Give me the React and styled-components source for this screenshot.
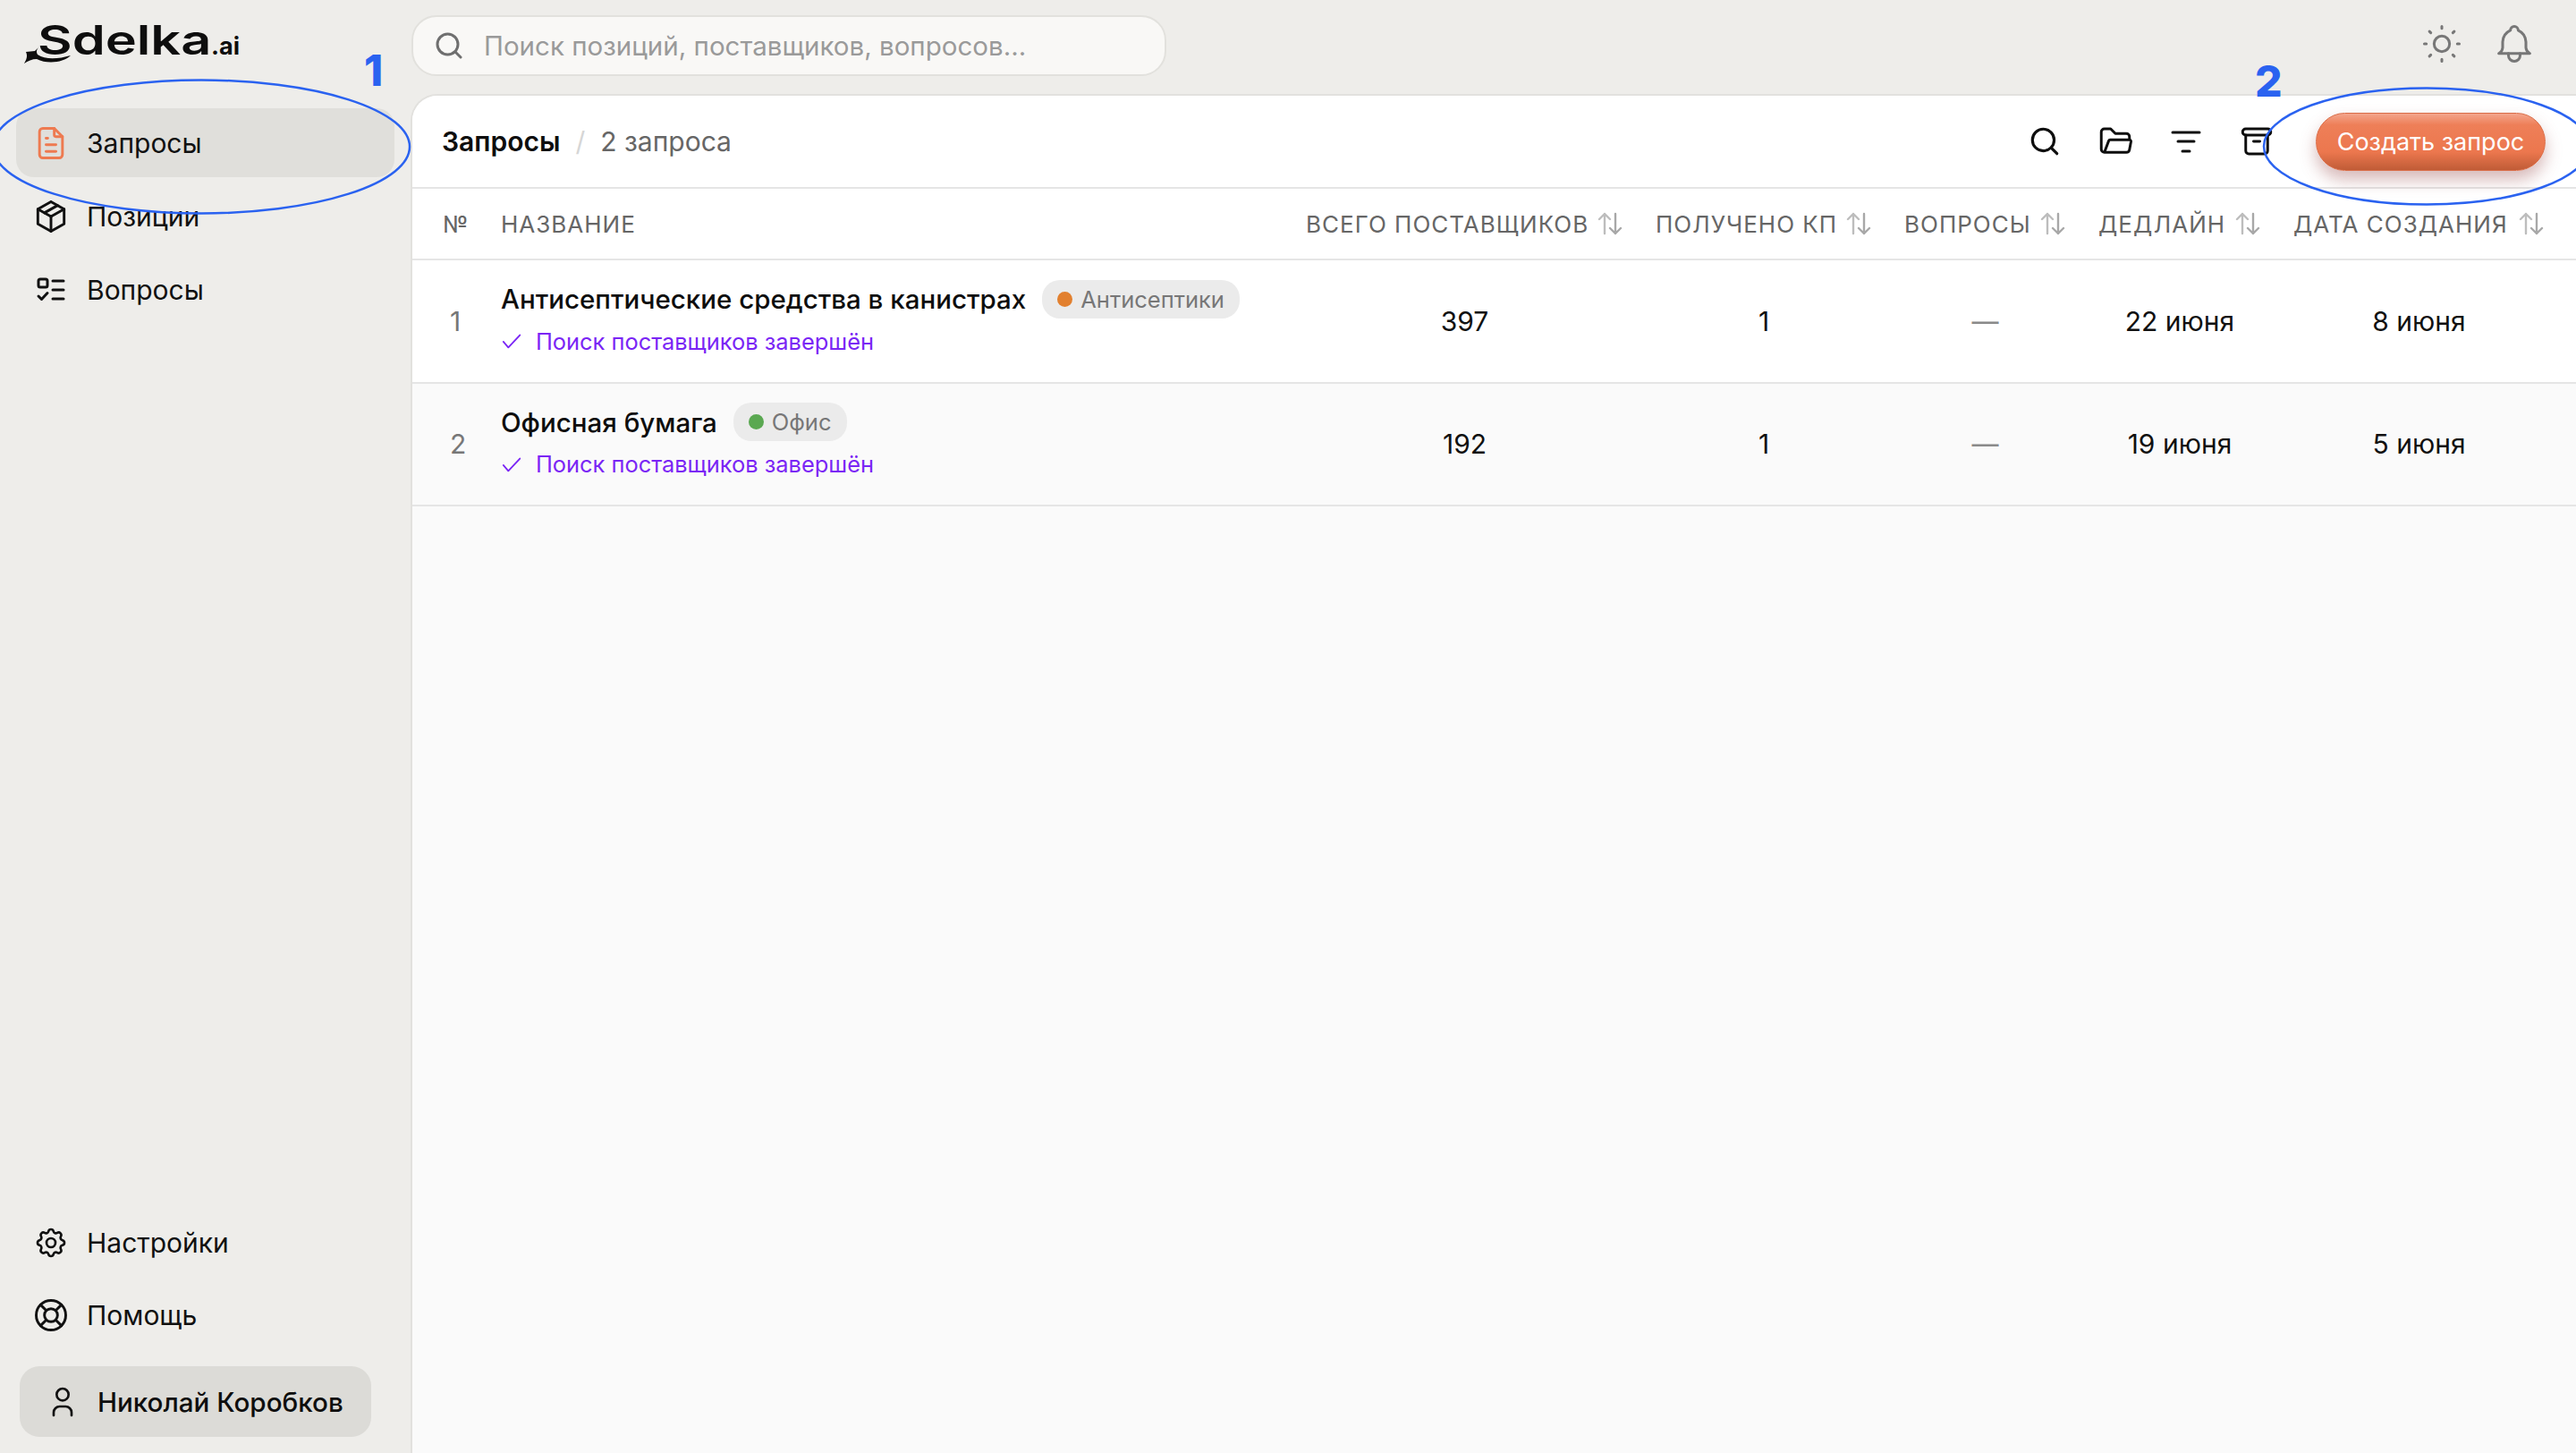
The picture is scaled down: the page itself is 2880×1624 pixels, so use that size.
import styled, { createGlobalStyle } from 'styled-components';
import {
  TbFileText, TbPackage, TbSettings, TbLifebuoy, TbUser, TbFolderOpen,
  TbArchive, TbSun, TbBell,
} from 'react-icons/tb';

const GlobalStyle = createGlobalStyle`
  html, body { margin: 0; padding: 0; background: #eeedea; }
  body { font-family: Inter, "Noto Sans", sans-serif; color: #0e0e0e; }
  * { box-sizing: border-box; }
`;

function SearchIcon({ size = 38 }) {
  return (
    <svg width={size} height={size} viewBox="0 0 36 36" fill="none" stroke="currentColor" strokeWidth="3" strokeLinecap="round">
      <circle cx="16.5" cy="16.5" r="11.5" />
      <path d="M25 25 L31 31" />
    </svg>
  );
}

function FilterIcon() {
  return (
    <svg viewBox="0 0 38 38" fill="none" stroke="currentColor" strokeWidth="3" strokeLinecap="round">
      <path d="M4 9 H34 M10 19 H28 M15 30 H23" />
    </svg>
  );
}

function QuestionsIcon() {
  return (
    <svg viewBox="0 0 36 36" fill="none" stroke="currentColor" strokeWidth="3" strokeLinecap="round" strokeLinejoin="round">
      <rect x="4" y="6" width="10" height="9" rx="2" />
      <path d="M4 25 L7.5 28.5 L14 21.5" />
      <path d="M20 8 H32 M20 18 H32 M20 28 H32" />
    </svg>
  );
}

function CheckIcon() {
  return (
    <svg viewBox="0 0 26 26" fill="none" stroke="currentColor" strokeWidth="2" strokeLinecap="round" strokeLinejoin="round">
      <path d="M3 14 L9 21 L23 6" />
    </svg>
  );
}

function SortIcon() {
  return (
    <SortSvg viewBox="0 0 30 30" fill="none" strokeWidth="2.4" strokeLinecap="round" strokeLinejoin="round">
      <path stroke="#bdbdbd" d="M9 26 V4 M3 10 L9 4 L15 10" />
      <path stroke="#a8a8a8" d="M21 4 V26 M15 20 L21 26 L27 20" />
    </SortSvg>
  );
}

const requests = [
  { id: 1, name: 'Антисептические средства в канистрах', tag: 'Антисептики', dot: '#e2802f', suppliers: 397, offers: 1, deadline: '22 июня', created: '8 июня' },
  { id: 2, name: 'Офисная бумага', tag: 'Офис', dot: '#5aa851', suppliers: 192, offers: 1, deadline: '19 июня', created: '5 июня', muted: true },
];

const columns = ['Всего поставщиков', 'Получено КП', 'Вопросы', 'Дедлайн', 'Дата создания'];

export default function App() {
  return (
    <Page>
      <GlobalStyle />
      <Sidebar>
        <Logo>
          <LogoSwoosh viewBox="0 0 52 20" fill="#0e0e0e">
            <path d="M0 20 C3 15 4 11 2 7 L12 6 C14 4 16 2 17 1 C14 4 13 7 15 10 C24 16 38 15 52 11 C44 19 26 21 14 15 C9 15 4 17 0 20 Z" />
          </LogoSwoosh>
          <LogoWord>Sdelka</LogoWord>
          <LogoSuffix>.ai</LogoSuffix>
        </Logo>
        <Nav>
          <NavItem $active>
            <NavIcon $accent><TbFileText /></NavIcon>
            Запросы
          </NavItem>
          <NavItem>
            <NavIcon><TbPackage /></NavIcon>
            Позиции
          </NavItem>
          <NavItem>
            <NavIcon><QuestionsIcon /></NavIcon>
            Вопросы
          </NavItem>
        </Nav>
        <SidebarBottom>
          <NavItem>
            <NavIcon $size={40}><TbSettings /></NavIcon>
            Настройки
          </NavItem>
          <NavItem>
            <NavIcon><TbLifebuoy /></NavIcon>
            Помощь
          </NavItem>
          <UserChip>
            <NavIcon $size={40}><TbUser /></NavIcon>
            Николай Коробков
          </UserChip>
        </SidebarBottom>
      </Sidebar>

      <Main>
        <TopBar>
          <SearchBox>
            <SearchGlyph><SearchIcon size={36} /></SearchGlyph>
            <SearchPlaceholder>Поиск позиций, поставщиков, вопросов...</SearchPlaceholder>
          </SearchBox>
          <TopActions>
            <TbSun />
            <TbBell />
          </TopActions>
        </TopBar>

        <Panel>
          <PanelHeader>
            <Breadcrumbs>
              <CrumbTitle>Запросы</CrumbTitle>
              <CrumbSlash>/</CrumbSlash>
              <CrumbCount>2 запроса</CrumbCount>
            </Breadcrumbs>
            <HeaderActions>
              <ActionIcons>
                <SearchIcon />
                <TbFolderOpen />
                <FilterIcon />
                <TbArchive />
              </ActionIcons>
              <CreateButton>Создать запрос</CreateButton>
            </HeaderActions>
          </PanelHeader>

          <HeadRow>
            <HeadCell>№</HeadCell>
            <HeadCell>Название</HeadCell>
            {columns.map((title) => (
              <HeadCell key={title}>
                {title}
                <SortIcon />
              </HeadCell>
            ))}
          </HeadRow>

          {requests.map((item) => (
            <Row key={item.id} $muted={item.muted}>
              <RowNumber>{item.id}</RowNumber>
              <NameCell>
                <NameLine>
                  {item.name}
                  <Tag>
                    <TagDot $color={item.dot} />
                    {item.tag}
                  </Tag>
                </NameLine>
                <Status>
                  <CheckIcon />
                  Поиск поставщиков завершён
                </Status>
              </NameCell>
              <ValueCell>{item.suppliers}</ValueCell>
              <ValueCell>{item.offers}</ValueCell>
              <ValueCell $dim>—</ValueCell>
              <ValueCell>{item.deadline}</ValueCell>
              <ValueCell>{item.created}</ValueCell>
            </Row>
          ))}
        </Panel>
      </Main>

      <Ellipse $left={-10} $top={88} $width={470} $height={152} viewBox="0 0 470 152">
        <ellipse cx="235" cy="76" rx="233" ry="74.5" />
      </Ellipse>
      <Ellipse $left={2529} $top={97} $width={368} $height={133} viewBox="0 0 368 133">
        <ellipse cx="184" cy="66.5" rx="182" ry="65" />
      </Ellipse>
      <Mark $left={407} $top={50}>1</Mark>
      <Mark $left={2521} $top={62}>2</Mark>
    </Page>
  );
}

const Page = styled.div`
  position: relative;
  display: flex;
  width: 100%;
  height: 100vh;
  overflow: hidden;
  background: #eeedea;
`;

const Sidebar = styled.aside`
  display: flex;
  flex-direction: column;
  flex: 0 0 459px;
  padding: 0 18px 18px;
`;

const Logo = styled.div`
  position: relative;
  display: flex;
  align-items: baseline;
  height: 121px;
  padding: 17px 0 0 24px;
  color: #0e0e0e;
`;

const LogoSwoosh = styled.svg`
  position: absolute;
  left: 9px;
  top: 51px;
  width: 52px;
  height: 20px;
`;

const LogoWord = styled.span`
  display: inline-block;
  width: 194px;
  font-family: Inter, sans-serif;
  font-size: 45px;
  font-weight: 600;
  line-height: 56px;
  transform: scaleX(1.32);
  transform-origin: left center;
`;

const LogoSuffix = styled.span`
  font-family: Inter, sans-serif;
  font-size: 27px;
  font-weight: 700;
`;

const Nav = styled.nav`
  display: flex;
  flex-direction: column;
  gap: 5px;
`;

const NavItem = styled.div`
  display: flex;
  align-items: center;
  gap: 22px;
  height: 77px;
  padding-left: 21px;
  border-radius: 20px;
  font-size: 30px;
  color: #111;
  background: ${(p) => (p.$active ? '#e0dfdb' : 'transparent')};
`;

const NavIcon = styled.span`
  display: flex;
  align-items: center;
  justify-content: center;
  width: 36px;
  height: 36px;
  color: ${(p) => (p.$accent ? '#ee7a50' : '#111')};

  svg {
    flex: none;
    width: 36px;
    height: 36px;
  }

  svg[viewBox='0 0 24 24'] {
    width: ${(p) => p.$size || 44}px;
    height: ${(p) => p.$size || 44}px;
    stroke-width: 1.6;
  }
`;

const SidebarBottom = styled.div`
  display: flex;
  flex-direction: column;
  gap: 4px;
  margin-top: auto;
`;

const UserChip = styled.div`
  display: flex;
  align-items: center;
  gap: 21px;
  width: 393px;
  height: 79px;
  margin: 15px 0 0 4px;
  padding-left: 30px;
  border-radius: 22px;
  background: #dcdbd7;
  font-size: 29.6px;
  font-weight: 500;
`;

const Main = styled.main`
  display: flex;
  flex-direction: column;
  flex: 1;
  min-width: 0;
`;

const TopBar = styled.header`
  display: flex;
  align-items: flex-start;
  justify-content: space-between;
  height: 105px;
  padding: 17px 43px 0 1px;
`;

const SearchBox = styled.div`
  display: flex;
  align-items: center;
  gap: 21px;
  width: 844px;
  height: 68px;
  padding-left: 22px;
  border: 2px solid #e2e1dd;
  border-radius: 28px;
  background: #f9f8f6;
`;

const SearchGlyph = styled.span`
  display: flex;
  color: #6f6f6f;
`;

const SearchPlaceholder = styled.span`
  font-size: 29.5px;
  color: #9a9a9a;
`;

const TopActions = styled.div`
  display: flex;
  gap: 29px;
  padding-top: 6px;
  color: #777;

  svg {
    width: 52px;
    height: 52px;
    stroke-width: 1.4;
  }
`;

const Panel = styled.section`
  flex: 1;
  border-top: 2px solid #e2e1de;
  border-left: 2px solid #e2e1de;
  border-top-left-radius: 30px;
  background: #fafafa;
  overflow: hidden;
`;

const PanelHeader = styled.div`
  display: flex;
  align-items: center;
  justify-content: space-between;
  height: 104px;
  padding: 0 34px 0 33px;
  border-bottom: 2px solid #e5e5e5;
  background: #fff;
`;

const Breadcrumbs = styled.div`
  display: flex;
  align-items: center;
  gap: 17px;
  font-size: 30px;
`;

const CrumbTitle = styled.span`
  font-weight: 600;
`;

const CrumbSlash = styled.span`
  color: #d6d6d6;
`;

const CrumbCount = styled.span`
  color: #666;
`;

const HeaderActions = styled.div`
  display: flex;
  align-items: center;
  gap: 47px;
`;

const ActionIcons = styled.div`
  display: flex;
  align-items: center;
  gap: 41px;
  color: #0e0e0e;

  svg {
    flex: none;
    width: 38px;
    height: 38px;
  }

  svg[viewBox='0 0 24 24'] {
    width: 42px;
    height: 42px;
    margin: 0 -2px;
    stroke-width: 1.7;
  }
`;

const CreateButton = styled.button`
  width: 257px;
  height: 65px;
  padding: 0;
  border: 1px solid #d96d48;
  border-radius: 33px;
  background: linear-gradient(180deg, #f3a58c 0%, #ee7f58 20%, #ec774e 68%, #c05c37 100%);
  box-shadow: 0 10px 18px rgba(150, 70, 70, 0.38);
  font-family: Inter, sans-serif;
  font-size: 27px;
  color: #fff;
`;

const tableGrid = `
  display: grid;
  grid-template-columns: 29px 1fr 355px 242px 181px 182px 281px;
  column-gap: 36px;
  padding: 0 35px 0 34px;
`;

const HeadRow = styled.div`
  ${tableGrid}
  align-items: center;
  height: 80px;
  border-bottom: 2px solid #e5e5e5;
  background: #fff;
`;

const HeadCell = styled.div`
  display: flex;
  align-items: center;
  justify-content: space-between;
  font-size: 26px;
  font-weight: 400;
  letter-spacing: 1px;
  text-transform: uppercase;
  color: #666;
  white-space: nowrap;
`;

const SortSvg = styled.svg`
  flex: none;
  width: 30px;
  height: 30px;
`;

const Row = styled.div`
  ${tableGrid}
  align-items: center;
  height: 137.5px;
  border-bottom: 2px solid #e5e5e5;
  background: ${(p) => (p.$muted ? '#fafafa' : '#fff')};
`;

const RowNumber = styled.div`
  padding-left: 8px;
  font-size: 30px;
  color: #777;
`;

const NameCell = styled.div`
  display: flex;
  flex-direction: column;
  gap: 10px;
  padding-bottom: 8px;
`;

const NameLine = styled.div`
  display: flex;
  align-items: center;
  gap: 18px;
  font-size: 29.5px;
  font-weight: 500;
  white-space: nowrap;
`;

const Tag = styled.span`
  display: flex;
  align-items: center;
  gap: 9px;
  height: 43px;
  padding: 0 17px;
  border-radius: 20px;
  background: #ebebeb;
  font-size: 25.5px;
  font-weight: 400;
  color: #777;
`;

const TagDot = styled.i`
  width: 17px;
  height: 17px;
  border-radius: 50%;
  background: ${(p) => p.$color};
`;

const Status = styled.div`
  display: flex;
  align-items: center;
  gap: 15px;
  font-size: 25.4px;
  color: #7a25f5;

  svg {
    width: 24px;
    height: 24px;
  }
`;

const ValueCell = styled.div`
  text-align: center;
  font-size: 30px;
  color: ${(p) => (p.$dim ? '#8a8a8a' : '#111')};
`;

const Ellipse = styled.svg`
  position: absolute;
  left: ${(p) => p.$left}px;
  top: ${(p) => p.$top}px;
  width: ${(p) => p.$width}px;
  height: ${(p) => p.$height}px;
  fill: none;
  stroke: #2a62f0;
  stroke-width: 2.5;
  pointer-events: none;
`;

const Mark = styled.span`
  position: absolute;
  left: ${(p) => p.$left}px;
  top: ${(p) => p.$top}px;
  font-family: Inter, sans-serif;
  font-size: 48px;
  font-weight: 800;
  line-height: 58px;
  color: #2a62f0;
`;
